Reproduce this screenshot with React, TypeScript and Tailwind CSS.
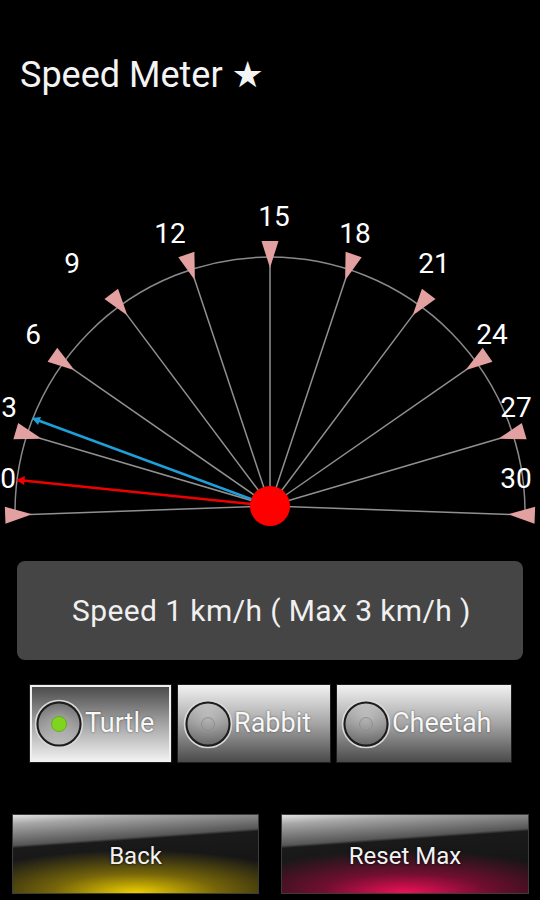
import React from "react";

const CX = 270;
const CY = 506;

const labels: { t: string; x: number; y: number }[] = [
  { t: "0", x: 8, y: 488 },
  { t: "3", x: 9, y: 417 },
  { t: "6", x: 33, y: 344 },
  { t: "9", x: 72, y: 273 },
  { t: "12", x: 170, y: 243 },
  { t: "15", x: 274, y: 226 },
  { t: "18", x: 355, y: 243 },
  { t: "21", x: 434, y: 273 },
  { t: "24", x: 492, y: 344 },
  { t: "27", x: 516, y: 417 },
  { t: "30", x: 516, y: 488 },
];

const pt = (deg: number, r: number) => {
  const a = (deg * Math.PI) / 180;
  return [CX - r * Math.cos(a), CY - r * Math.sin(a)];
};

const Gauge: React.FC = () => {
  const ticks = Array.from({ length: 11 }, (_, k) => -2 + k * 18.4);
  return (
    <svg width="540" height="340" viewBox="0 190 540 340" className="block">
      <path
        d="M 15.03 516 A 255 255 0 1 1 524.97 516"
        fill="none"
        stroke="#8a8a8a"
        strokeWidth="1.5"
      />
      {ticks.map((deg, i) => {
        const [tx, ty] = pt(deg, 240);
        return (
          <line
            key={"l" + i}
            x1={CX}
            y1={CY}
            x2={tx}
            y2={ty}
            stroke="#909090"
            strokeWidth="1.5"
          />
        );
      })}
      {ticks.map((deg, i) => {
        const [tx, ty] = pt(deg, 238);
        const [bx, by] = pt(deg, 265);
        const a = (deg * Math.PI) / 180;
        const px = Math.sin(a) * 8.5;
        const py = -Math.cos(a) * 8.5;
        return (
          <polygon
            key={"t" + i}
            points={`${tx},${ty} ${bx + px},${by + py} ${bx - px},${by - py}`}
            fill="#e2a0a0"
          />
        );
      })}
      {labels.map((l) => (
        <text
          key={l.t}
          x={l.x}
          y={l.y}
          fill="#ffffff"
          fontSize="28"
          textAnchor="middle"
          fontFamily="Roboto, sans-serif"
        >
          {l.t}
        </text>
      ))}
      <line x1={CX} y1={CY} x2="33" y2="418.5" stroke="#1e9fd8" strokeWidth="2.5" />
      <polygon points="32,418 41,417 38,425" fill="#1e9fd8" />
      <line x1={CX} y1={CY} x2="18" y2="480" stroke="#ee0000" strokeWidth="2.5" />
      <polygon points="16,480 25,476 24,485" fill="#ee0000" />
      <circle cx={CX} cy={CY} r="20" fill="#ff0000" />
    </svg>
  );
};

const Radio: React.FC<{ on: boolean }> = ({ on }) => (
  <svg width="50" height="50" viewBox="0 0 50 50" className="shrink-0">
    <defs>
      <radialGradient id={on ? "rgOn" : "rgOff"} cx="50%" cy="40%" r="60%">
        <stop offset="0%" stopColor="#ffffff" stopOpacity="0.15" />
        <stop offset="100%" stopColor="#000000" stopOpacity="0.1" />
      </radialGradient>
    </defs>
    <circle cx="25" cy="25" r="23.5" fill="none" stroke="#d8d8d8" strokeWidth="1.5" />
    <circle
      cx="25"
      cy="25"
      r="21.5"
      fill={on ? "url(#rgOn)" : "url(#rgOff)"}
      stroke="#1c1c1c"
      strokeWidth="2"
    />
    {on ? (
      <circle cx="25" cy="25" r="7.5" fill="#7fd41e" stroke="#5ea514" strokeWidth="0.8" />
    ) : (
      <circle cx="25" cy="25" r="6.5" fill="#9a9a9a" fillOpacity="0.25" stroke="#8a8a8a" strokeWidth="0.8" />
    )}
  </svg>
);

const RadioButton: React.FC<{ label: string; on?: boolean; w: string; pl: string }> = ({
  label,
  on = false,
  w,
  pl,
}) => (
  <div
    className={`${w} ${pl} h-full flex items-center border border-[#1e1e1e] ${
      on
        ? "bg-[linear-gradient(to_bottom,#474747_0%,#9a9a9a_45%,#f4f4f4_100%)] shadow-[inset_0_0_0_2px_#f0f0f0]"
        : "bg-[linear-gradient(to_bottom,#f2f2f2_0%,#a5a5a5_50%,#4a4a4a_100%)]"
    }`}
  >
    <Radio on={on} />
    <span className="ml-[1px] text-[27px] leading-none text-[#f7f7f7] [text-shadow:0_0_2px_rgba(0,0,0,0.55)]">
      {label}
    </span>
  </div>
);

export default function App() {
  return (
    <div className="w-[540px] h-[900px] bg-black overflow-hidden flex flex-col font-['Roboto',sans-serif] text-white">
      <div className="h-[190px] pt-[55px] pl-[20px] text-[36px] leading-[40px] text-[#f4f4f4]">
        Speed Meter <span className="font-['DejaVu_Sans',sans-serif] text-[36px]">★</span>
      </div>

      <Gauge />

      <div className="mt-[31px] mx-[17px] h-[99px] rounded-[8px] bg-[#454545] flex items-center justify-center pl-[3px] text-[30px] tracking-[0.4px] text-[#f0f0f0]">
        Speed 1 km/h ( Max 3 km/h )
      </div>

      <div className="mt-[24px] ml-[29px] h-[79px] flex gap-[5px]">
        <RadioButton label="Turtle" on w="w-[143px]" pl="pl-[4px]" />
        <RadioButton label="Rabbit" w="w-[154px]" pl="pl-[5px]" />
        <RadioButton label="Cheetah" w="w-[176px]" pl="pl-[4px]" />
      </div>

      <div className="mt-[51px] ml-[12px] h-[80px] flex gap-[22px]">
        <div className="w-[247px] h-full border border-[#3c3c3c] flex items-center justify-center pt-[4px] text-[24px] text-[#f2f2f2] [text-shadow:0_0_3px_#000] bg-[radial-gradient(ellipse_75%_55%_at_50%_100%,rgba(240,208,0,1)_0%,rgba(200,170,0,0.55)_45%,rgba(0,0,0,0)_100%),linear-gradient(176deg,#e2e2e2_0%,#a6a6a6_10%,#7a7a7a_22%,#565656_32%,#1a1a1a_35%,#111111_100%)]">
          Back
        </div>
        <div className="w-[248px] h-full border border-[#3c3c3c] flex items-center justify-center pt-[4px] text-[24px] text-[#f2f2f2] [text-shadow:0_0_3px_#000] bg-[radial-gradient(ellipse_75%_55%_at_50%_100%,rgba(240,16,90,1)_0%,rgba(190,10,70,0.55)_45%,rgba(0,0,0,0)_100%),linear-gradient(176deg,#e2e2e2_0%,#a6a6a6_10%,#7a7a7a_22%,#565656_32%,#1a1a1a_35%,#111111_100%)]">
          Reset Max
        </div>
      </div>
    </div>
  );
}
